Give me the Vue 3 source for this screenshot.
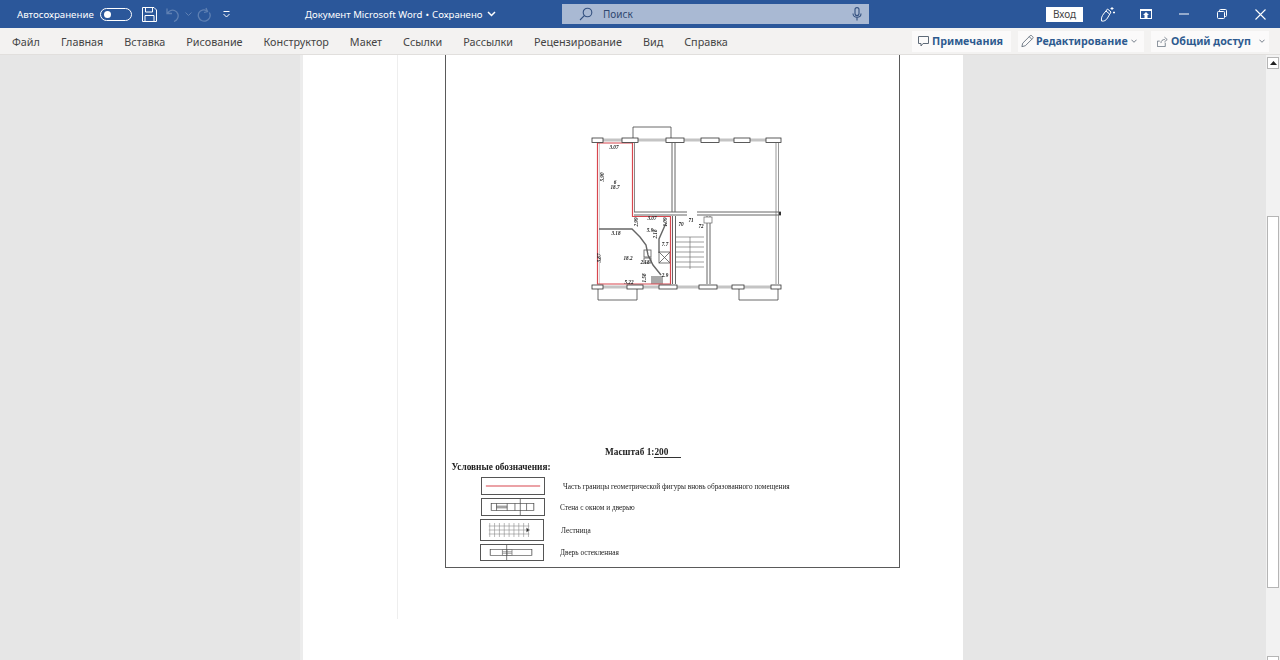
<script setup>
const tabs = ["Файл", "Главная", "Вставка", "Рисование", "Конструктор", "Макет", "Ссылки", "Рассылки", "Рецензирование", "Вид", "Справка"];

// piers along the outer walls of the plan: [x, width]
const topPiers = [[593, 11], [623, 16], [667, 18], [702, 18], [735, 16], [767, 15]];
const bottomPiers = [[593, 11], [628, 16], [660, 18], [700, 18], [733, 12], [772, 10]];
const steps = [237, 242, 247, 252, 257, 262, 267];

const planLabels = [
  { x: 615, y: 149, t: "3.07" },
  { x: 616, y: 184, t: "6" },
  { x: 616, y: 189, t: "18.7" },
  { x: 653, y: 220, t: "3.07" },
  { x: 617, y: 235, t: "3.18" },
  { x: 651, y: 232, t: "5.9" },
  { x: 629, y: 260, t: "18.2" },
  { x: 630, y: 284, t: "5.22" },
  { x: 682, y: 226, t: "70" },
  { x: 692, y: 222, t: "71" },
  { x: 702, y: 228, t: "72" },
  { x: 666, y: 246, t: "7.7" },
  { x: 666, y: 277, t: "2.9" },
  { x: 646, y: 264, t: "2.18" },
];
const planRotated = [
  { x: 605, y: 177, t: "5.90" },
  { x: 602, y: 258, t: "3.87" },
  { x: 647, y: 278, t: "1.58" },
  { x: 639, y: 222, t: "2.99" },
  { x: 668, y: 222, t: "1.09" },
  { x: 658, y: 234, t: "2.18" },
];

const legend = [
  { cls: "row-a", text: "Часть границы геометрической фигуры вновь образованного помещения" },
  { cls: "row-b", text: "Стена с окном и дверью" },
  { cls: "row-c", text: "Лестница" },
  { cls: "row-d", text: "Дверь остекленная" },
];
</script>

<template>
  <div class="word">
    <header class="titlebar">
      <div class="qat">
        <span class="autosave">Автосохранение</span>
        <span class="toggle"><i class="knob"></i></span>
        <svg class="qat-icon save" width="15" height="15" viewBox="0 0 15 15" fill="none" stroke="#fff" stroke-width="1">
          <path d="M.5.5h11.5l2.5 2.5v11.5H.5z" />
          <path d="M3.5.5v4.5h7V.5M3 14.5V8.500h9v6" />
        </svg>
        <svg class="qat-icon undo" width="14" height="15" viewBox="0 0 14 15" fill="none" stroke="#5f80b3" stroke-width="1.300">
          <path d="M1 1.500v5h5M1.500 6.500C3 3.500 6 2.500 8.500 3.500c3.500 1.500 4.500 5 3 8-.8 1.600-2.200 2.500-3.500 3" />
        </svg>
        <svg class="qat-icon mini" width="7" height="4" viewBox="0 0 7 4" fill="none" stroke="#5f80b3"><path d="M.5.500l3 3 3-3" /></svg>
        <svg class="qat-icon redo" width="14" height="15" viewBox="0 0 14 15" fill="none" stroke="#5f80b3" stroke-width="1.300">
          <path d="M9 1l1.500 3.500L7 5.500" />
          <path d="M10 4C7 2 3.500 3 2 5.500c-1.500 3 -.5 6.500 2.500 8 3 1.300 6.500.3 8-2.500 1-2 .8-4-.2-5.500" />
        </svg>
        <svg class="qat-icon more" width="7" height="7" viewBox="0 0 7 7" fill="none" stroke="#fff"><path d="M.5.500h6M.5 3l3 3 3-3" /></svg>
      </div>
      <div class="doc-title">
        <span>Документ Microsoft Word</span><span class="dot">•</span><span>Сохранено</span>
        <svg width="9" height="6" viewBox="0 0 9 6" fill="none" stroke="#fff" stroke-width="1.500"><path d="M1 1l3.500 3.500L8 1" /></svg>
      </div>
      <div class="search">
        <svg width="14" height="14" viewBox="0 0 14 14" fill="none" stroke="#33507f" stroke-width="1.100">
          <circle cx="8.500" cy="5.500" r="4.300" /><path d="M5.300 8.700L1 13" />
        </svg>
        <span class="search-text">Поиск</span>
        <svg class="mic" width="10" height="14" viewBox="0 0 10 14" fill="none" stroke="#33507f" stroke-width="1.100">
          <rect x="3" y=".6" width="4" height="8" rx="2" /><path d="M1 6.500c0 5 8 5 8 0M5 10.500v3" />
        </svg>
      </div>
      <button class="signin">Вход</button>
      <div class="winbtns">
        <span class="winbtn">
          <svg width="16" height="16" viewBox="0 0 16 16" fill="none" stroke="#fff" stroke-width="1">
            <path d="M1.500 15c-.5-3 .5-5 2-7l4-5 3.500 3-3.500 6c-1.500 2.500-3.500 3.500-6 3zM6 5l3.500 3" />
            <path d="M12 1v3M10.500 2.500h3M14 5.500v2M13 6.500h2" />
          </svg>
        </span>
        <span class="winbtn">
          <svg width="12" height="10" viewBox="0 0 12 10" fill="#fff">
            <path d="M0 0h12v10H0zM1 2v7h3.500V6H3l3-3 3 3H7.500v3H11V2z" />
          </svg>
        </span>
        <span class="winbtn">
          <svg width="10" height="2" viewBox="0 0 10 2" fill="#fff"><path d="M0 .5h10v1H0z" /></svg>
        </span>
        <span class="winbtn">
          <svg width="10" height="10" viewBox="0 0 10 10" fill="none" stroke="#fff"><rect x=".5" y="2.500" width="7" height="7" rx="1" /><path d="M2.500 2.500v-1a1 1 0 0 1 1-1h5a1 1 0 0 1 1 1v5a1 1 0 0 1-1 1h-1" /></svg>
        </span>
        <span class="winbtn">
          <svg width="11" height="11" viewBox="0 0 11 11" fill="none" stroke="#fff" stroke-width="1.100"><path d="M.5.500l10 10M10.500.500l-10 10" /></svg>
        </span>
      </div>
    </header>

    <nav class="ribbon">
      <div class="tabs">
        <span v-for="tab in tabs" :key="tab" class="tab">{{ tab }}</span>
      </div>
      <div class="actions">
        <button class="action comments">
          <svg width="11" height="11" viewBox="0 0 11 11" fill="none" stroke="#5f6b78"><path d="M.5.500h10v7H5L3 10V7.500H.5z" /></svg>
          Примечания
        </button>
        <button class="action editing">
          <svg width="13" height="14" viewBox="0 0 15 15" fill="none" stroke="#5f6b78"><path d="M1 14l1-4 8.500-8.500a1.400 1.400 0 0 1 2 0l1 1a1.400 1.400 0 0 1 0 2L5 13z" /><path d="M9.500 2.500l3 3" /></svg>
          Редактирование
          <svg class="chev" width="6" height="4" viewBox="0 0 7 4" fill="none" stroke="#5f6b78"><path d="M.5.500l3 3 3-3" /></svg>
        </button>
        <button class="action share">
          <svg width="11" height="11" viewBox="0 0 14 14" fill="none" stroke="#5f6b78"><path d="M.5 6.500h3M.5 6.500v7h10v-5M5 9c0-3 2-4.500 5-4.500M9.500 1.500l3.500 3-3.500 3" /></svg>
          Общий доступ
          <svg class="chev share-chev" width="6" height="4" viewBox="0 0 7 4" fill="none" stroke="#5f6b78"><path d="M.5.500l3 3 3-3" /></svg>
        </button>
      </div>
    </nav>

    <main class="workspace">
      <div class="canvas">
        <section class="page">
          <div class="margin-guide"></div>
          <div class="frame">
            <svg class="plan" width="210" height="185" viewBox="585 120 210 185" fill="none">
              <!-- balconies -->
              <g stroke="#444" stroke-width=".8">
                <path d="M634 138v-11h38v11" />
                <path d="M599 289v11h39v-11" />
                <path d="M740 289v11h39v-11" />
              </g>
              <!-- windows -->
              <g stroke="#c4c4c4" stroke-width="3">
                <path d="M604 140h19M639 140h28M685 140h17M720 140h15M751 140h16" />
                <path d="M604 287h24M644 287h16M678 287h22M718 287h15M745 287h27" />
              </g>
              <!-- walls -->
              <g stroke="#666" stroke-width="1">
                <path d="M600.500 143v141" stroke="#d2d2d2" />
                <path d="M635.500 143v69" stroke="#888" />
                <path d="M673 143v69M676 143v69" />
                <path d="M777 143v141M779.500 143v141" stroke="#999" />
                <path d="M635 212h53M635 215h53M698 212h84M698 215h84" />
                <path d="M673.500 216v68M676.500 216v68" />
                <path d="M708 216v68M711 216v68" />
              </g>
              <rect x="705" y="217" width="8" height="6" fill="#fff" stroke="#666" stroke-width=".7" />
              <rect x="780" y="212" width="2" height="3" fill="#333" />
              <!-- stairs -->
              <g stroke="#777" stroke-width=".7">
                <path v-for="s in steps" :key="s" :d="`M677 ${s}h28`" />
                <path d="M691 237v32" />
              </g>
              <!-- partitions -->
              <g stroke="#666" stroke-width="1.400">
                <path d="M600 229h33l8 8 6 8 2 10 5 10 8 10" />
                <path d="M667 223l-7 16v14" />
              </g>
              <g stroke="#555" stroke-width=".8">
                <rect x="660" y="252" width="11" height="11" />
                <path d="M660 252l11 11M671 252l-11 11" />
                <rect x="645" y="250" width="7" height="7" />
                <rect x="645" y="258" width="7" height="5" />
              </g>
              <rect x="652" y="276" width="12" height="8" fill="#a9a9a9" />
              <!-- red boundary of the new room -->
              <path d="M598.500 143V284H671.500V216.500H633.500V143z" stroke="#d8474f" stroke-width="1.200" />
              <g v-for="[x, w] in topPiers" :key="'t' + x">
                <rect :x="x" y="138" :width="w" height="4.500" fill="#fff" stroke="#333" stroke-width=".8" />
              </g>
              <g v-for="[x, w] in bottomPiers" :key="'b' + x">
                <rect :x="x" y="285" :width="w" height="4" fill="#fff" stroke="#333" stroke-width=".8" />
              </g>
              <g class="plan-text">
                <text v-for="l in planLabels" :key="l.x + l.t" :x="l.x" :y="l.y" text-anchor="middle">{{ l.t }}</text>
                <text v-for="l in planRotated" :key="l.x + l.t" text-anchor="middle" :transform="`translate(${l.x} ${l.y}) rotate(-90)`">{{ l.t }}</text>
              </g>
            </svg>

            <p class="scale">Масштаб 1:<span class="scale-value">200</span></p>
            <p class="legend-title">Условные обозначения:</p>

            <div v-for="(row, i) in legend" :key="row.cls" class="legend-row" :class="row.cls">
              <svg class="swatch" viewBox="0 0 64 20" preserveAspectRatio="none" fill="none">
                <g v-if="i === 0"><path d="M4 10h56" stroke="#d8474f" stroke-width="1.500" /></g>
                <g v-else-if="i === 1" stroke="#444" stroke-width=".8">
                  <rect x="9.500" y="5.500" width="44" height="9" />
                  <path d="M15 5.500v9M26 5.500v9M34 5.500v9M46 5.500v9M15 9h11M15 11h11" />
                  <path d="M39.500 0v20" />
                </g>
                <g v-else-if="i === 2" stroke="#888" stroke-width=".6">
                  <path d="M8 6h42M8 10h42M8 14h42" />
                  <path d="M9 3v14M14 3v14M19 3v14M24 3v14M29 3v14M34 3v14M39 3v14M44 3v14M49 3v14" />
                  <path d="M47 8l3 2-3 2z" fill="#222" />
                </g>
                <g v-else stroke="#444" stroke-width=".8">
                  <rect x="9.500" y="6" width="43" height="8" />
                  <rect x="22" y="6" width="10" height="8" stroke="#777" />
                  <path d="M22 9h10M22 11h10M27 6v8" stroke="#777" />
                  <path d="M26.500 0v20" />
                </g>
              </svg>
              <span class="legend-text">{{ row.text }}</span>
            </div>
          </div>
        </section>
      </div>

      <aside class="scrollbar">
        <span class="scroll-btn">
          <svg width="7" height="4" viewBox="0 0 7 4" fill="#222"><path d="M0 4l3.500-4L7 4z" /></svg>
        </span>
        <span class="scroll-thumb"></span>
        <span class="scroll-btn scroll-btn-end"></span>
      </aside>
    </main>
  </div>
</template>

<style>
html,
body {
  margin: 0;
  overflow: hidden;
}
</style>

<style scoped>
.word {
  display: flex;
  flex-direction: column;
  width: 1280px;
  height: 660px;
  overflow: hidden;
  background: #e6e6e6;
  font-family: "Noto Sans", "Open Sans", sans-serif;
}

.titlebar {
  display: flex;
  align-items: center;
  flex: none;
  height: 28px;
  background: #2b579a;
  color: #fff;
  font-size: 11px;
}

.qat {
  display: flex;
  align-items: center;
  width: 305px;
  padding-left: 17px;
  box-sizing: border-box;
}

.autosave {
  width: 83px;
  white-space: nowrap;
  font-size: 9.700px;
}

.toggle {
  display: flex;
  align-items: center;
  box-sizing: border-box;
  width: 32px;
  height: 13px;
  padding-left: 3px;
  border: 1px solid #fff;
  border-radius: 7px;
}

.knob {
  width: 7px;
  height: 7px;
  border-radius: 50%;
  background: #fff;
}

.qat-icon {
  flex: none;
}

.save {
  margin-left: 10px;
}

.undo {
  margin-left: 9px;
}

.mini {
  margin-left: 5px;
}

.redo {
  margin-left: 5px;
}

.more {
  margin-left: 12px;
}

.doc-title {
  display: flex;
  align-items: center;
  width: 257px;
  white-space: nowrap;
  font-size: 9.600px;
}

.dot {
  margin: 0 3px;
}

.doc-title svg {
  margin-left: 5px;
}

.search {
  display: flex;
  align-items: center;
  box-sizing: border-box;
  width: 307px;
  height: 20px;
  padding: 0 7px 0 17px;
  background: #a9b9d3;
  color: #2f4770;
}

.search-text {
  margin-left: 10px;
  font-size: 10px;
}

.mic {
  margin-left: auto;
}

.signin {
  width: 37px;
  height: 15px;
  margin-left: 177px;
  padding: 0;
  border: 0;
  background: #fff;
  color: #444;
  font: 10px "Noto Sans", sans-serif;
}

.winbtns {
  display: flex;
  margin-left: 6px;
}

.winbtn {
  display: flex;
  align-items: center;
  justify-content: center;
  width: 38px;
  height: 28px;
}

.ribbon {
  display: flex;
  align-items: center;
  flex: none;
  box-sizing: border-box;
  height: 27px;
  padding: 0 11px 0 12px;
  background: #f3f2f1;
  border-bottom: 1px solid #e1dfdd;
}

.tabs {
  display: flex;
  gap: 21px;
  color: #444;
  font-size: 10.800px;
  white-space: nowrap;
}

.actions {
  display: flex;
  gap: 7px;
  margin-left: auto;
}

.action {
  display: flex;
  align-items: center;
  box-sizing: border-box;
  height: 21px;
  padding: 0 0 0 6px;
  border: 0;
  background: #fbfafa;
  color: #2e5a8f;
  font: 700 10.700px "Noto Sans", sans-serif;
  white-space: nowrap;
}

.action svg {
  margin-right: 3px;
}

.comments {
  width: 99px;
}

.editing {
  width: 126px;
  padding-left: 3px;
}

.editing svg {
  margin-right: 2px;
}

.share {
  width: 118px;
}

.action .chev {
  margin: 0 0 0 3px;
}

.action .share-chev {
  margin-left: 8px;
}

.workspace {
  display: flex;
  flex: 1;
  min-height: 0;
}

.canvas {
  flex: 1;
  padding-left: 303px;
  overflow: hidden;
}

.page {
  display: flex;
  align-items: flex-start;
  box-sizing: border-box;
  width: 660px;
  height: 100%;
  padding-left: 94px;
  background: #fff;
  box-shadow: -3px 0 0 #ececec;
}

.margin-guide {
  flex: none;
  width: 1px;
  height: 564px;
  background: #eeeeee;
}

.frame {
  flex: none;
  box-sizing: border-box;
  width: 455px;
  height: 513px;
  margin-left: 47px;
  border: 1.500px solid #5a5a5a;
  border-top: 0;
  font-family: "Liberation Serif", serif;
  color: #222;
  filter: blur(0.35px);
}

.plan {
  display: block;
  margin: 65px 0 0 138px;
}

.plan-text {
  fill: #222;
  font: italic 700 5.200px "Liberation Serif", serif;
}

.scale {
  margin: 141px 0 0 159px;
  width: 76px;
  font-size: 9.300px;
  font-weight: 700;
  line-height: 12px;
  white-space: nowrap;
}

.scale-value {
  display: inline-block;
  width: 27px;
  border-bottom: 1px solid #333;
  line-height: 10px;
}

.legend-title {
  margin: 3px 0 4px 5.500px;
  font-size: 9.300px;
  font-weight: 700;
  line-height: 12px;
}

.legend-row {
  display: flex;
  align-items: center;
  margin-left: 35px;
}

.swatch {
  flex: none;
  box-sizing: border-box;
  width: 64px;
  height: 100%;
  border: 1px solid #555;
}

.legend-text {
  font-size: 7.300px;
  white-space: nowrap;
}

.row-a {
  height: 18px;
}

.row-a .legend-text {
  margin-left: 18px;
}

.row-b {
  height: 18px;
  margin-top: 3px;
}

.row-b .legend-text {
  margin-left: 15px;
}

.row-c {
  height: 22px;
  margin-top: 3px;
  margin-left: 34px;
}

.row-c .legend-text {
  margin-left: 17px;
}

.row-d {
  height: 17px;
  margin-top: 3px;
  margin-left: 34px;
}

.row-d .legend-text {
  margin-left: 16px;
}

.scrollbar {
  display: flex;
  flex-direction: column;
  align-items: center;
  flex: none;
  box-sizing: border-box;
  width: 14px;
  padding-top: 2px;
  background: #f2f2f2;
}

.scroll-btn {
  display: flex;
  align-items: center;
  justify-content: center;
  flex: none;
  box-sizing: border-box;
  width: 12px;
  height: 12px;
  background: #fff;
  border: 1px solid #b5b5b5;
}

.scroll-thumb {
  flex: none;
  box-sizing: border-box;
  width: 12px;
  height: 372px;
  margin-top: 147px;
  background: #fff;
  border: 1px solid #b5b5b5;
}

.scroll-btn-end {
  margin-top: 68px;
}
</style>
